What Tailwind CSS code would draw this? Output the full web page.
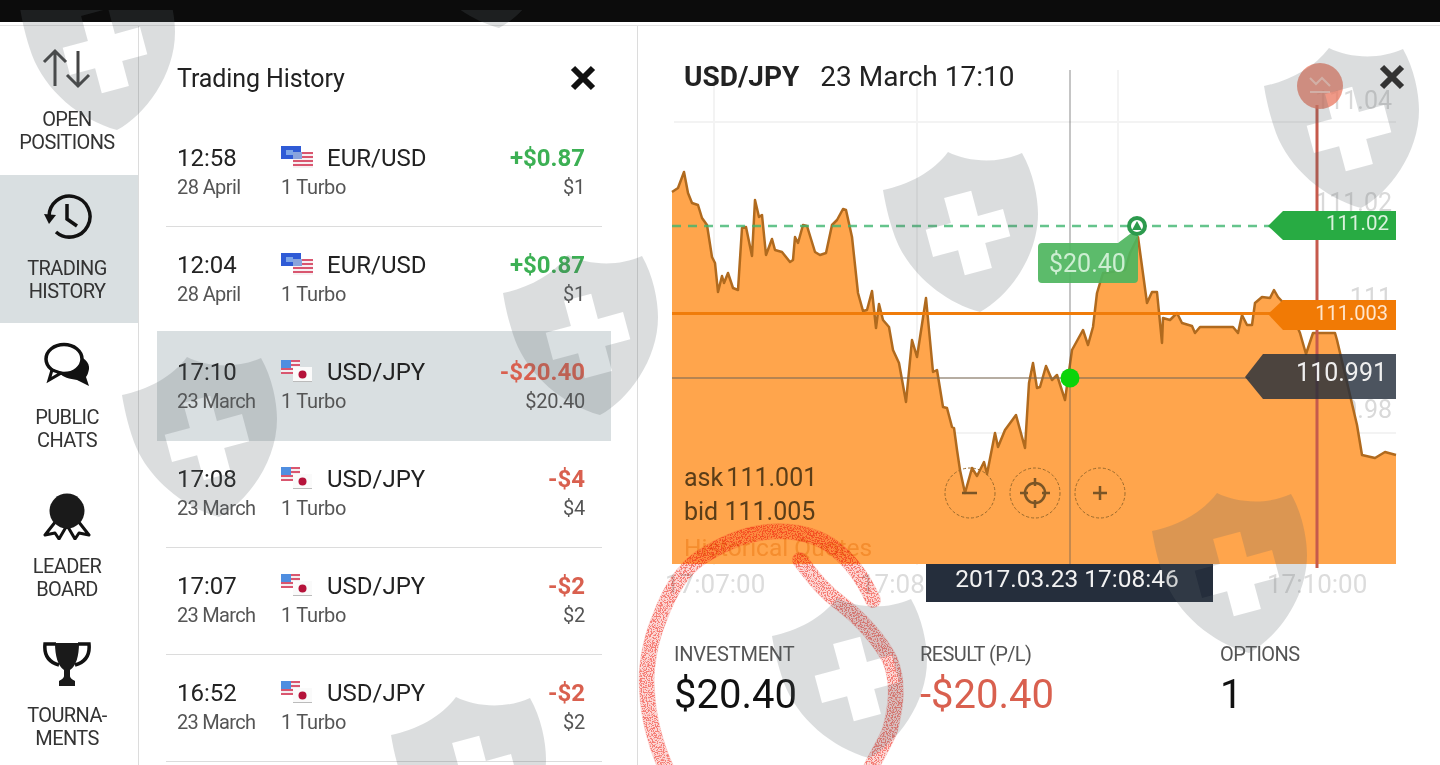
<!DOCTYPE html>
<html lang="en">
<head>
  <meta charset="UTF-8" />
  <title>Trading History</title>
  <script src="https://cdn.jsdelivr.net/npm/@tailwindcss/browser@4"></script>
</head>
<body class="relative h-screen overflow-hidden bg-white font-['Roboto',sans-serif] text-[#222]">

  <!-- shared flags and watermark -->
  <svg class="absolute w-0 h-0">
    <symbol id="flag-eu" viewBox="0 0 32 22">
      <rect x="0" y="0" width="20" height="13" fill="#2f5bd6" />
      <rect x="5" y="4" width="7" height="5" fill="#7ea6e8" />
      <rect x="12" y="6" width="20" height="16" fill="#f7f0f2" />
      <path d="M12 7h20M12 11h20M12 15h20M12 19h20" stroke="#d9566f" stroke-width="2" />
      <rect x="12" y="6" width="9" height="7" fill="#8aa4dc" />
    </symbol>
    <symbol id="flag-jp" viewBox="0 0 32 22">
      <rect x="0" y="0" width="19" height="14" fill="#f3eef0" />
      <path d="M0 1h19M0 5h19M0 9h19M0 13h19" stroke="#d9566f" stroke-width="2" />
      <rect x="0" y="0" width="10" height="8" fill="#4f8ee0" />
      <rect x="12" y="7" width="19" height="15" fill="#fafafa" />
      <rect x="12" y="21" width="19" height="1" fill="#bbb" />
      <circle cx="21.5" cy="14.5" r="4" fill="#b5123a" />
    </symbol>
    <symbol id="shield" viewBox="0 0 155 160" overflow="visible">
      <path fill-rule="evenodd" d="M0 38C25 33 50 20 65 0C85 10 115 12 139 1C150 20 155 45 155 62C155 105 125 145 97 160C60 150 25 120 12 85C5 65 2 50 0 38ZM61.100 46L88.200 38.700L94.900 63.900L120 57.100L127.300 84.200L102.200 90.900L108.900 116L81.800 123.300L75.100 98.200L50 104.900L42.700 77.800L67.900 71.100Z" fill="#5a6469" fill-opacity="0.22" />
    </symbol>
    <filter id="speckle" x="-5%" y="-5%" width="110%" height="110%">
      <feTurbulence type="fractalNoise" baseFrequency="0.8" numOctaves="2" seed="3" />
      <feColorMatrix values="0 0 0 0 0  0 0 0 0 0  0 0 0 0 0  0 0 0 9 -4.200" />
      <feComposite in="SourceGraphic" operator="in" />
    </filter>
  </svg>

  <div class="h-[22px] bg-[#0c0c0c]"></div>
  <div class="h-[4px] border-b border-[#e2e2e2]"></div>

  <div class="flex h-[739px]">

    <!-- Sidebar -->
    <aside class="w-[139px] shrink-0 border-r border-[#dcdcdc] pr-[4px] text-[20px] leading-[23px] tracking-[-0.6px] text-center text-[#333]">
      <div class="h-[149px] pt-[17px] -mr-[4px] pr-[4px] flex flex-col items-center">
        <svg class="w-[50px] h-[50px]" viewBox="0 0 50 50" fill="none" stroke="#444" stroke-width="3">
          <path d="M13 43V8M2 19L13 8L24 19" /><path d="M36 8V43M25 32L36 43L47 32" />
        </svg>
        <div class="mt-[15px]">OPEN<br>POSITIONS</div>
      </div>
      <div class="h-[148px] pt-[17px] -mr-[4px] pr-[4px] bg-[#d9dfe1] flex flex-col items-center">
        <svg class="w-[50px] h-[50px]" viewBox="0 0 50 50" fill="none" stroke="#111" stroke-width="3.5">
          <path d="M7 25A20.5 20.5 0 1 1 14 40" />
          <path d="M2 20L7 30L14 21Z" fill="#111" stroke="none" transform="translate(0 2)" />
          <path d="M25 12V27L35 34" />
        </svg>
        <div class="mt-[15px]">TRADING<br>HISTORY</div>
      </div>
      <div class="h-[148px] pt-[16px] flex flex-col items-center">
        <svg class="w-[50px] h-[50px]" viewBox="0 0 50 50">
          <path d="M28 16C42 16 48 24 47 30C46 36 44 38 44 38L47 47L35 41C28 40 20 38 18 34Z" fill="#111" />
          <ellipse cx="22" cy="20" rx="18" ry="14.5" fill="#fff" stroke="#111" stroke-width="3.5" />
          <path d="M10 31L7 41L19 34Z" fill="#fff" stroke="#111" stroke-width="3" />
        </svg>
        <div class="mt-[17px]">PUBLIC<br>CHATS</div>
      </div>
      <div class="h-[148px] pt-[19px] flex flex-col items-center">
        <svg class="w-[50px] h-[50px]" viewBox="0 0 50 50">
          <path d="M14 31L3 45L13 43L17 49L24 37M36 31L47 45L37 43L33 49L26 37" fill="#fff" stroke="#111" stroke-width="3" stroke-linejoin="round" />
          <circle cx="25" cy="21" r="17.5" fill="#1a1a1a" />
        </svg>
        <div class="mt-[15px]">LEADER<br>BOARD</div>
      </div>
      <div class="pt-[21px] flex flex-col items-center">
        <svg class="w-[50px] h-[50px]" viewBox="0 0 50 50">
          <path d="M14 4H3C2 14 6 22 17 25M36 4H47C48 14 44 22 33 25" fill="none" stroke="#111" stroke-width="3.5" />
          <path d="M13 3H37C37 16 34 26 28 30V36C28 38 31 40 33 41V46H17V41C19 40 22 38 22 36V30C16 26 13 16 13 3Z" fill="#1a1a1a" />
        </svg>
        <div class="mt-[14px]">TOURNA-<br>MENTS</div>
      </div>
    </aside>

    <!-- Trading history list -->
    <section class="w-[499px] shrink-0 border-r border-[#dcdcdc] pl-[18px] pr-[26px]">
      <div class="h-[94px] pl-[20px] pr-[15px] pt-[35px] flex justify-between text-[25px] leading-[36px] tracking-[-0.1px]">
        <span>Trading History</span>
        <svg class="w-[26px] h-[26px] mt-[4px]" viewBox="0 0 26 26" stroke="#111" stroke-width="6"><path d="M3 3L23 23M23 3L3 23" /></svg>
      </div>

      <div class="h-[107px] mx-[9px] pl-[11px] pr-[17px] pt-[23px] border-b border-[#dcdcdc] flex">
        <div class="w-[104px]"><div class="text-[24px] leading-[30px]">12:58</div><div class="text-[20px] leading-[28px] tracking-[-0.6px] text-[#555]">28 April</div></div>
        <div class="flex-1"><div class="flex items-center h-[30px] text-[24px]"><svg class="w-[32px] h-[22px] mr-[14px] -mt-[3px]"><use href="#flag-eu" /></svg>EUR/USD</div><div class="text-[20px] leading-[28px] tracking-[-0.3px] text-[#555]">1 Turbo</div></div>
        <div class="text-right"><div class="text-[24px] leading-[30px] font-bold text-[#3cb054]">+$0.87</div><div class="text-[20px] leading-[28px] tracking-[-0.3px] text-[#555]">$1</div></div>
      </div>

      <div class="h-[104px] mx-[9px] pl-[11px] pr-[17px] pt-[23px] flex">
        <div class="w-[104px]"><div class="text-[24px] leading-[30px]">12:04</div><div class="text-[20px] leading-[28px] tracking-[-0.6px] text-[#555]">28 April</div></div>
        <div class="flex-1"><div class="flex items-center h-[30px] text-[24px]"><svg class="w-[32px] h-[22px] mr-[14px] -mt-[3px]"><use href="#flag-eu" /></svg>EUR/USD</div><div class="text-[20px] leading-[28px] tracking-[-0.3px] text-[#555]">1 Turbo</div></div>
        <div class="text-right"><div class="text-[24px] leading-[30px] font-bold text-[#3cb054]">+$0.87</div><div class="text-[20px] leading-[28px] tracking-[-0.3px] text-[#555]">$1</div></div>
      </div>

      <div class="h-[110px] bg-[#d9dfe1] pl-[20px] pr-[26px] pt-[26px] flex">
        <div class="w-[104px]"><div class="text-[24px] leading-[30px]">17:10</div><div class="text-[20px] leading-[28px] tracking-[-0.7px] text-[#555]">23 March</div></div>
        <div class="flex-1"><div class="flex items-center h-[30px] text-[24px]"><svg class="w-[32px] h-[22px] mr-[14px] -mt-[3px]"><use href="#flag-jp" /></svg>USD/JPY</div><div class="text-[20px] leading-[28px] tracking-[-0.3px] text-[#555]">1 Turbo</div></div>
        <div class="text-right"><div class="text-[24px] leading-[30px] font-bold text-[#d9604f]">-$20.40</div><div class="text-[20px] leading-[28px] tracking-[-0.3px] text-[#555]">$20.40</div></div>
      </div>

      <div class="h-[107px] mx-[9px] pl-[11px] pr-[17px] pt-[23px] border-b border-[#dcdcdc] flex">
        <div class="w-[104px]"><div class="text-[24px] leading-[30px]">17:08</div><div class="text-[20px] leading-[28px] tracking-[-0.7px] text-[#555]">23 March</div></div>
        <div class="flex-1"><div class="flex items-center h-[30px] text-[24px]"><svg class="w-[32px] h-[22px] mr-[14px] -mt-[3px]"><use href="#flag-jp" /></svg>USD/JPY</div><div class="text-[20px] leading-[28px] tracking-[-0.3px] text-[#555]">1 Turbo</div></div>
        <div class="text-right"><div class="text-[24px] leading-[30px] font-bold text-[#d9604f]">-$4</div><div class="text-[20px] leading-[28px] tracking-[-0.3px] text-[#555]">$4</div></div>
      </div>

      <div class="h-[107px] mx-[9px] pl-[11px] pr-[17px] pt-[23px] border-b border-[#dcdcdc] flex">
        <div class="w-[104px]"><div class="text-[24px] leading-[30px]">17:07</div><div class="text-[20px] leading-[28px] tracking-[-0.7px] text-[#555]">23 March</div></div>
        <div class="flex-1"><div class="flex items-center h-[30px] text-[24px]"><svg class="w-[32px] h-[22px] mr-[14px] -mt-[3px]"><use href="#flag-jp" /></svg>USD/JPY</div><div class="text-[20px] leading-[28px] tracking-[-0.3px] text-[#555]">1 Turbo</div></div>
        <div class="text-right"><div class="text-[24px] leading-[30px] font-bold text-[#d9604f]">-$2</div><div class="text-[20px] leading-[28px] tracking-[-0.3px] text-[#555]">$2</div></div>
      </div>

      <div class="h-[107px] mx-[9px] pl-[11px] pr-[17px] pt-[23px] border-b border-[#dcdcdc] flex">
        <div class="w-[104px]"><div class="text-[24px] leading-[30px]">16:52</div><div class="text-[20px] leading-[28px] tracking-[-0.7px] text-[#555]">23 March</div></div>
        <div class="flex-1"><div class="flex items-center h-[30px] text-[24px]"><svg class="w-[32px] h-[22px] mr-[14px] -mt-[3px]"><use href="#flag-jp" /></svg>USD/JPY</div><div class="text-[20px] leading-[28px] tracking-[-0.3px] text-[#555]">1 Turbo</div></div>
        <div class="text-right"><div class="text-[24px] leading-[30px] font-bold text-[#d9604f]">-$2</div><div class="text-[20px] leading-[28px] tracking-[-0.3px] text-[#555]">$2</div></div>
      </div>
    </section>

    <!-- Deal details -->
    <section class="flex-1 min-w-0">
      <div class="h-[84px] pl-[46px] pr-[35px] pt-[33px] flex justify-between relative z-10">
        <div class="text-[28px] leading-[36px]"><span class="font-bold mr-[21px]">USD/JPY</span><span>23 March 17:10</span></div>
        <svg class="w-[26px] h-[26px] mt-[5px]" viewBox="0 0 26 26" stroke="#333" stroke-width="6"><path d="M3 3L23 23M23 3L3 23" /></svg>
      </div>

      <!-- chart drawn in page coordinates -->
      <svg class="block w-[802px] h-[490px] overflow-visible font-['Roboto',sans-serif]" viewBox="638 110 802 490">
        <g stroke="#f3f3f3" stroke-width="2">
          <path d="M674 122H1396M674 433H1396M714 70V565M917 70V565M1118 70V565" />
        </g>
        <g fill="#d9d9d9" font-size="25" text-anchor="end">
          <text x="1392" y="109">111.04</text>
          <text x="1392" y="211">111.02</text>
          <text x="1392" y="306">111</text>
          <text x="1392" y="418">110.98</text>
          <text x="1392" y="521">110.96</text>
        </g>
        <g fill="#dcdcdc" font-size="26">
          <text x="665" y="593">17:07:00</text>
          <text x="860" y="593">17:08</text>
          <text x="1267" y="593">17:10:00</text>
        </g>

        <path d="M672 192L678 188L684 172L688 193L692 203L698 205L702 218L707 225L712 257L715 263L718 292L722 276L724 283L728 273L733 288L738 290L742 228L746 227L752 256L755 200L759 217L762 215L766 255L772 239L775 250L782 252L790 262L793 260L795 237L798 243L803 225L807 226L815 252L820 255L826 253L832 225L837 220L843 209L846 210L852 237L858 293L863 311L867 310L872 291L876 328L879 304L883 320L889 327L893 350L899 363L906 402L912 340L917 357L926 298L933 372L937 370L943 407L947 408L952 427L954 428L957 450L960 470L965 493L972 468L977 476L984 462L987 474L995 433L998 447L1005 430L1016 415L1025 448L1029 383L1033 363L1037 388L1040 387L1046 366L1052 380L1057 375L1065 400L1072 350L1083 330L1088 345L1093 327L1097 293L1103 273L1125 270L1130 253L1138 237L1147 303L1152 292L1157 292L1162 343L1163 318L1170 320L1177 313L1182 323L1192 326L1195 333L1200 327L1233 327L1238 333L1242 315L1247 325L1252 325L1255 303L1262 297L1270 298L1274 290L1278 297L1290 310L1300 333L1306 354L1313 333L1335 333L1337 340L1357 425L1362 455L1375 458L1385 452L1396 455V564H672Z" fill="#ffa54c" stroke="none" />
        <path d="M672 192L678 188L684 172L688 193L692 203L698 205L702 218L707 225L712 257L715 263L718 292L722 276L724 283L728 273L733 288L738 290L742 228L746 227L752 256L755 200L759 217L762 215L766 255L772 239L775 250L782 252L790 262L793 260L795 237L798 243L803 225L807 226L815 252L820 255L826 253L832 225L837 220L843 209L846 210L852 237L858 293L863 311L867 310L872 291L876 328L879 304L883 320L889 327L893 350L899 363L906 402L912 340L917 357L926 298L933 372L937 370L943 407L947 408L952 427L954 428L957 450L960 470L965 493L972 468L977 476L984 462L987 474L995 433L998 447L1005 430L1016 415L1025 448L1029 383L1033 363L1037 388L1040 387L1046 366L1052 380L1057 375L1065 400L1072 350L1083 330L1088 345L1093 327L1097 293L1103 273L1125 270L1130 253L1138 237L1147 303L1152 292L1157 292L1162 343L1163 318L1170 320L1177 313L1182 323L1192 326L1195 333L1200 327L1233 327L1238 333L1242 315L1247 325L1252 325L1255 303L1262 297L1270 298L1274 290L1278 297L1290 310L1300 333L1306 354L1313 333L1335 333L1337 340L1357 425L1362 455L1375 458L1385 452L1396 455" fill="none" stroke="#b06a1e" stroke-width="2.500" stroke-linejoin="round" />

        <path d="M672 378H1250" stroke="#7a6a55" stroke-opacity="0.55" stroke-width="2" />
        <path d="M1070 70V565" stroke="#555" stroke-opacity="0.45" stroke-width="1.5" />
        <path d="M672 313.500H1270" stroke="#f07c0a" stroke-width="3" />
        <path d="M672 226H1270" stroke="#3fb56f" stroke-opacity="0.8" stroke-width="2.500" stroke-dasharray="9 7" />

        <path d="M1317 105V568" stroke="#c65a4c" stroke-width="3" />
        <circle cx="1320" cy="86" r="23" fill="#e9775f" fill-opacity="0.75" />
        <path d="M1310 78L1316 84L1322 78L1330 86M1310 92H1330" fill="none" stroke="#f4c5b8" stroke-width="2" />

        <path d="M1268 226L1283 211H1396V240H1283Z" fill="#28ab43" />
        <text x="1389" y="230" font-size="20.500" fill="#d9f2dc" text-anchor="end">111.02</text>
        <path d="M1268 314L1283 300H1396V330H1283Z" fill="#f17a05" />
        <text x="1388" y="320" font-size="20" fill="#ffe6cc" text-anchor="end">111.003</text>
        <path d="M1245 377L1263 354H1396V399H1263Z" fill="#252e3c" fill-opacity="0.82" />
        <text x="1387" y="381" font-size="25" fill="#efefef" text-anchor="end">110.991</text>

        <path d="M1038 247Q1038 243 1042 243H1118L1130 234L1138 232V279Q1138 283 1134 283H1042Q1038 283 1038 279Z" fill="#4eb55e" fill-opacity="0.92" />
        <text x="1049" y="272" font-size="25" fill="#cdeed2">$20.40</text>
        <circle cx="1137" cy="226" r="8" fill="#fff" stroke="#2c9a4d" stroke-width="4" />
        <path d="M1137 221L1142 230H1132Z" fill="#2c9a4d" />
        <circle cx="1070" cy="378" r="9.500" fill="#0ad40a" />

        <g fill="none" stroke="#9a6a2c" stroke-width="1" stroke-dasharray="3 2">
          <circle cx="970" cy="493" r="25" />
          <circle cx="1035" cy="493" r="25" />
          <circle cx="1100" cy="493" r="25" />
        </g>
        <path d="M962 493H977M1093 493H1107M1100 486V500" stroke="#7a5526" stroke-width="2.500" />
        <g fill="none" stroke="#7a5526" stroke-width="2.500">
          <circle cx="1035" cy="493" r="10" />
          <path d="M1035 478V486M1035 500V508M1020 493H1028M1042 493H1050" />
        </g>

        <g font-size="25" fill="#5a3d18">
          <text x="684" y="486" word-spacing="-3">ask 111.001</text>
          <text x="684" y="520">bid 111.005</text>
        </g>
        <text x="684" y="556" font-size="24.500" fill="#f58d2e">Historical Quotes</text>

        <rect x="926" y="564" width="287" height="38" fill="#252e3c" />
        <text x="1067" y="587" font-size="24.500" fill="#f2f2f2" text-anchor="middle">2017.03.23 17:08:46</text>
      </svg>

      <div class="pl-[36px] pt-[42px] grid grid-cols-[246px_300px_1fr]">
        <div>
          <div class="text-[20px] leading-[24px] tracking-[-0.2px] text-[#555]">INVESTMENT</div>
          <div class="text-[40px] leading-[58px] text-[#111]">$20.40</div>
        </div>
        <div>
          <div class="text-[20px] leading-[24px] tracking-[-0.6px] text-[#555]">RESULT (P/L)</div>
          <div class="text-[40px] leading-[58px] text-[#d9604f]">-$20.40</div>
        </div>
        <div>
          <div class="text-[20px] leading-[24px] tracking-[-0.6px] text-[#555]">OPTIONS</div>
          <div class="text-[40px] leading-[58px] text-[#111]">1</div>
        </div>
      </div>
    </section>
  </div>

  <!-- red pen circle drawn over the screenshot -->
  <svg class="absolute inset-0 w-[1440px] h-[765px] mix-blend-multiply" viewBox="0 0 1440 765" fill="none" stroke="#f4655c" stroke-linecap="round">
    <g stroke-width="16" stroke-opacity="0.25">
      <path d="M873 600C862 575 847 557 830 545C810 532 785 530 767 532C745 534 720 545 700 558C680 572 668 595 660 617C650 640 645 670 647 690C648 715 655 745 667 770" />
      <path d="M800 560C815 580 825 592 840 603C860 618 880 640 890 660C900 685 895 710 890 730C884 745 875 758 870 770" />
    </g>
    <g stroke-width="15" stroke-opacity="0.8" filter="url(#speckle)">
      <path d="M873 600C862 575 847 557 830 545C810 532 785 530 767 532C745 534 720 545 700 558C680 572 668 595 660 617C650 640 645 670 647 690C648 715 655 745 667 770" />
      <path d="M800 560C815 580 825 592 840 603C860 618 880 640 890 660C900 685 895 710 890 730C884 745 875 758 870 770" />
    </g>
  </svg>

  <!-- shield watermarks -->
  <svg class="absolute inset-0 w-[1440px] h-[765px]" viewBox="0 0 1440 765">
    <clipPath id="below-edge"><rect x="0" y="10" width="1440" height="755" /></clipPath>
    <g clip-path="url(#below-edge)">
      <use href="#shield" x="20" y="-30" width="155" height="160" />
      <use href="#shield" x="402" y="-132" width="155" height="160" />
      <use href="#shield" x="503" y="255" width="155" height="160" />
      <use href="#shield" x="883" y="152" width="155" height="160" />
      <use href="#shield" x="1264" y="48" width="155" height="160" />
      <use href="#shield" x="122" y="357" width="155" height="160" />
      <use href="#shield" x="1152" y="493" width="155" height="160" />
      <use href="#shield" x="772" y="598" width="155" height="160" />
      <use href="#shield" x="391" y="697" width="155" height="160" />
    </g>
  </svg>

</body>
</html>
